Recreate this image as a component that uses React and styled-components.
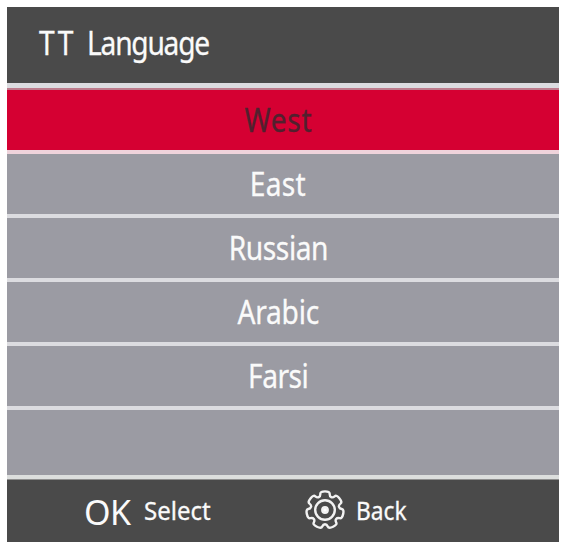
import React from 'react'
import styled, { createGlobalStyle } from 'styled-components'

const languages = [
  { name: 'West', spacing: 0.7 },
  { name: 'East', spacing: 0.3 },
  { name: 'Russian', spacing: -0.5 },
  { name: 'Arabic', spacing: -0.3 },
  { name: 'Farsi', spacing: -0.6 },
]

const TEETH = 7

// outline of the gear: wide teeth with small notches, corners rounded by curves
function gearPath() {
  const step = 360 / TEETH
  const points = []
  for (let i = 0; i < TEETH; i++) {
    const mid = -90 + i * step
    const corners = [[-18.5, 14.4], [-14.5, 19.2], [14.5, 19.2], [18.5, 14.4]]
    corners.forEach(([offset, r]) => {
      const a = ((mid + offset) * Math.PI) / 180
      points.push([20 + r * Math.cos(a), 20 + r * Math.sin(a)])
    })
  }
  const halfway = (p, q) => `${((p[0] + q[0]) / 2).toFixed(2)} ${((p[1] + q[1]) / 2).toFixed(2)}`
  const start = halfway(points[points.length - 1], points[0])
  const curves = points.map((p, i) => {
    const next = points[(i + 1) % points.length]
    return `Q${p[0].toFixed(2)} ${p[1].toFixed(2)} ${halfway(p, next)}`
  })
  return `M${start} ${curves.join(' ')} Z`
}

function App() {
  return (
    <>
      <GlobalStyle />
      <Menu>
        <Header>
          <Title><Initials>TT</Initials> Language</Title>
        </Header>
        <List>
          {languages.map(({ name, spacing }, i) => (
            <Item key={name} $active={i === 0}>
              <ItemText $spacing={spacing}>{name}</ItemText>
            </Item>
          ))}
          <EmptyItem />
        </List>
        <Footer>
          <OkKey>OK</OkKey>
          <Hint $scale={0.96}>Select</Hint>
          <GearIcon viewBox="0 0 40 40">
            <path d={gearPath()} />
            <circle cx="20" cy="20" r="9.8" />
            <circle cx="20" cy="20" r="2.7" fill="#fff" />
          </GearIcon>
          <Hint $scale={0.91}>Back</Hint>
        </Footer>
      </Menu>
    </>
  )
}

export default App

const GlobalStyle = createGlobalStyle`
  * {
    box-sizing: border-box;
  }
  body {
    margin: 0;
    background-color: #fff;
    font-family: 'Noto Sans', sans-serif;
    overflow: hidden;
  }
`;
const Menu = styled.div`
  width: 552px;
  height: 535px;
  margin: 7px 0 0 7px;
  display: flex;
  flex-direction: column;
  color: #fafafa;
`;
const Header = styled.div`
  height: 76px;
  padding: 14px 0 0 32px;
  background-color: #4a4a4a;
`;
const Title = styled.h1`
  width: max-content;
  margin: 0;
  font-size: 32px;
  font-weight: 400;
  line-height: 44px;
  letter-spacing: -1.4px;
  word-spacing: 5.5px;
  transform: scaleX(0.88);
  transform-origin: left;
  -webkit-text-stroke: 0.3px currentColor;
`;
const Initials = styled.span`
  letter-spacing: 3px;
`;
const List = styled.ul`
  margin: 0;
  padding: 0;
  list-style: none;
  border-top: 5px solid #dcdce0;
`;
const Item = styled.li`
  height: ${({ $active }) => ($active ? '66px' : '64px')};
  display: flex;
  justify-content: center;
  padding: 8px 10px 0 0;
  background-color: ${({ $active }) => ($active ? '#d50032' : '#9b9ba3')};
  border-top: ${({ $active }) => ($active ? '2px solid #bd7b8c' : '0')};
  color: ${({ $active }) => ($active ? '#52202e' : '#fafafa')};
  border-bottom: 4px solid ${({ $active }) => ($active ? '#efd3db' : '#dcdce0')};
`;
const ItemText = styled.span`
  font-size: 32px;
  line-height: 44px;
  letter-spacing: ${({ $spacing }) => $spacing}px;
  transform: scaleX(0.88);
  -webkit-text-stroke: 0.3px currentColor;
`;
const EmptyItem = styled.li`
  height: 69px;
  background-color: #9b9ba3;
  border-bottom: 4px solid #dcdedd;
`;
const Footer = styled.div`
  flex: 1;
  display: flex;
  align-items: flex-start;
  padding: 0 0 0 77px;
  background-color: #4a4a4a;
  border-top: 1px solid #8e8e8e;
`;
const OkKey = styled.span`
  width: 60px;
  margin-top: 8px;
  font-size: 34px;
  line-height: 48px;
  letter-spacing: -0.5px;
`;
const Hint = styled.span`
  width: 161px;
  margin-top: 12px;
  font-size: 25px;
  line-height: 36px;
  transform: scaleX(${({ $scale }) => $scale});
  transform-origin: left;
  -webkit-text-stroke: 0.3px currentColor;
`;
const GearIcon = styled.svg`
  flex: none;
  width: 40px;
  height: 40px;
  margin: 10px 11px 0 0;
  fill: none;
  stroke: #f2f2f2;
  stroke-width: 2.4;
  stroke-linejoin: round;
`;
